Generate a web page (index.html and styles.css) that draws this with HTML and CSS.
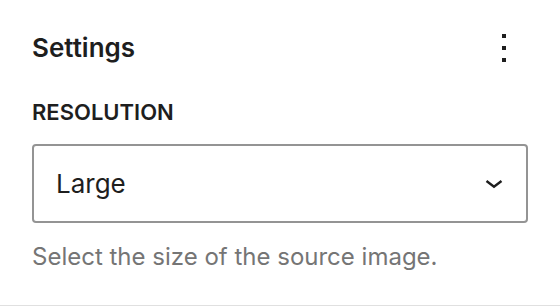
FILE: index.html
```html
<!DOCTYPE html>
<html>
<head>
  <title>Settings</title>
  <link rel="stylesheet" href="styles.css">
</head>
<body>
  <div class="panel">
    <!-- Panel header -->
    <div class="panel-header">
      <h2 class="panel-title">Settings</h2>
      <button class="icon-button" type="button" aria-label="Options">
        <svg width="48" height="48" viewBox="0 0 24 24">
          <path d="M13 19h-2v-2h2v2zm0-6h-2v-2h2v2zm0-6h-2V5h2v2z" fill="#1e1e1e"/>
        </svg>
      </button>
    </div>

    <!-- Resolution field -->
    <label class="field-label" for="resolution">Resolution</label>
    <div class="select-wrap">
      <select id="resolution" class="select-control">
        <option>Thumbnail</option>
        <option>Medium</option>
        <option selected>Large</option>
        <option>Full Size</option>
      </select>
      <svg class="select-arrow" width="18" height="10" viewBox="0 0 18 10">
        <path d="M1.5 2l7.5 5.8L16.5 2" fill="none" stroke="#1e1e1e" stroke-width="2.4"/>
      </svg>
    </div>
    <p class="help-text">Select the size of the source image.</p>
  </div>
</body>
</html>
```

FILE: styles.css
```css
/* Settings panel */
body {
  margin: 0;
  background: #fff;
  font-family: Inter, "Noto Sans", sans-serif;
  color: #1e1e1e;
}
.panel {
  padding: 24px 32px 32px;
  border-bottom: 1px solid #e0e0e0;
}
.panel-header {
  display: flex;
  align-items: center;
  justify-content: space-between;
  height: 48px;
}
.panel-title {
  margin: 0;
  font-size: 26px;
  font-weight: 600;
  line-height: 48px;
}
.icon-button {
  width: 48px;
  height: 48px;
  padding: 0;
  border: 0;
  background: none;
}
.icon-button svg {
  display: block;
}
.field-label {
  display: block;
  margin-top: 24px;
  font-size: 22px;
  font-weight: 600;
  line-height: 32px;
  text-transform: uppercase;
}
.select-wrap {
  position: relative;
  margin-top: 16px;
}
.select-control {
  display: block;
  width: 100%;
  height: 79px;
  box-sizing: border-box;
  padding: 0 60px 0 22px;
  border: 2px solid #949494;
  border-radius: 4px;
  background: #fff;
  font-family: inherit;
  font-size: 26px;
  color: #1e1e1e;
  -webkit-appearance: none;
  appearance: none;
}
.select-arrow {
  position: absolute;
  right: 25px;
  top: 35px;
}
.help-text {
  margin: 18px 0 0;
  font-size: 24px;
  line-height: 32px;
  color: #757575;
}
```
